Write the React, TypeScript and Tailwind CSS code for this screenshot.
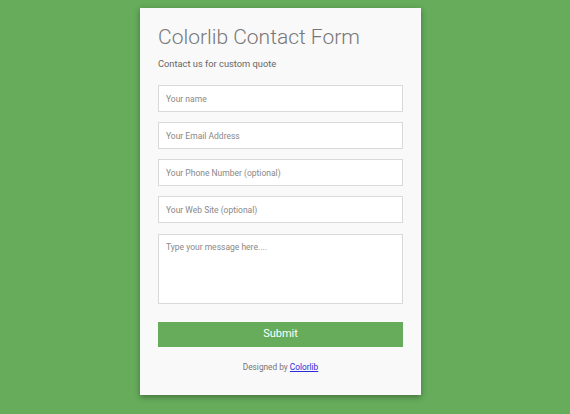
const campos = [
  "Your name",
  "Your Email Address",
  "Your Phone Number (optional)",
  "Your Web Site (optional)",
];

export default function App() {
  return (
    <div className="min-h-[414px] bg-[#66ac5b] pt-2 font-['Roboto',sans-serif]">
      <div className="ml-[140px] w-[281px] bg-[#f9f9f9] pb-[22px] pl-[18px] pr-[18px] pt-[14px] shadow-[0_2px_6px_rgba(0,0,0,0.35)]">
        <h1 className="text-[21px] font-light leading-[30px] text-[#777]">Colorlib Contact Form</h1>
        <p className="mt-[5px] text-[9.3px] leading-[14px] text-[#666]">Contact us for custom quote</p>

        <form className="mt-[14px] flex flex-col gap-[10px]" onSubmit={(e) => e.preventDefault()}>
          {campos.map((campo) => (
            <input
              key={campo}
              type="text"
              placeholder={campo}
              className="h-[27px] w-full border border-[#d9d9d9] bg-white px-[7px] text-[8.5px] text-[#555] outline-none placeholder:text-[#888]"
            />
          ))}
          <textarea
            placeholder="Type your message here...."
            className="mt-px h-[70px] w-full resize-none border border-[#d9d9d9] bg-white px-[7px] py-[6px] text-[8.5px] text-[#555] outline-none placeholder:text-[#888]"
          />
          <button
            type="submit"
            className="mt-[8px] h-[25px] w-full bg-[#66ac5b] text-[11px] text-white"
          >
            Submit
          </button>
        </form>

        <p className="mt-[14px] text-center text-[8.3px] text-[#777]">
          Designed by{" "}
          <a href="#" className="text-[#2b2bdd] underline">
            Colorlib
          </a>
        </p>
      </div>
    </div>
  );
}
